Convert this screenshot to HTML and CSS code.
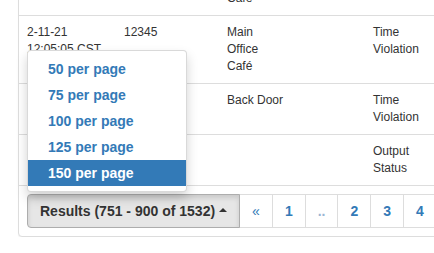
FILE: index.html
```html
<!DOCTYPE html>
<html lang="en">
<head>
  <meta charset="UTF-8">
  <meta name="viewport" content="width=device-width, initial-scale=1.0">
  <title>Events</title>
  <link rel="stylesheet" href="styles.css">
</head>
<body>
  <div id="panel">
    <table id="events">
      <colgroup>
        <col class="col-time">
        <col class="col-id">
        <col class="col-door">
        <col class="col-type">
        <col class="col-rest">
      </colgroup>
      <tbody>
        <tr>
          <td>2-11-21<br>12:05:05 CST</td>
          <td>12345</td>
          <td>Main<br>Office<br>Café</td>
          <td></td>
          <td></td>
        </tr>
        <tr>
          <td>2-11-21<br>12:05:05 CST</td>
          <td>12345</td>
          <td>Main<br>Office<br>Café</td>
          <td>Time<br>Violation</td>
          <td></td>
        </tr>
        <tr>
          <td>2-11-21<br>12:05:05 CST</td>
          <td>12345</td>
          <td>Back Door</td>
          <td>Time<br>Violation</td>
          <td></td>
        </tr>
        <tr>
          <td>2-11-21<br>12:05:05 CST</td>
          <td>12345</td>
          <td></td>
          <td>Output<br>Status</td>
          <td></td>
        </tr>
      </tbody>
    </table>

    <div id="footer">
      <div class="pager">
        <div class="dropup">
          <button class="results-btn">Results (751 - 900 of 1532)<span class="caret"></span></button>
          <ul class="per-page">
            <li><a href="#">50 per page</a></li>
            <li><a href="#">75 per page</a></li>
            <li><a href="#">100 per page</a></li>
            <li><a href="#">125 per page</a></li>
            <li class="active"><a href="#">150 per page</a></li>
          </ul>
        </div>
        <a class="page-link prev" href="#">&laquo;</a>
        <a class="page-link" href="#">1</a>
        <span class="page-link gap">..</span>
        <a class="page-link" href="#">2</a>
        <a class="page-link" href="#">3</a>
        <a class="page-link" href="#">4</a>
        <a class="page-link" href="#">5</a>
      </div>
    </div>
  </div>
</body>
</html>
```

FILE: styles.css
```css
html, body {
  margin: 0;
  padding: 0;
  overflow: hidden;
}

body {
  font-family: "Liberation Sans", Arial, sans-serif;
  font-size: 12px;
  color: #333;
  background-color: #fff;
}

#panel {
  width: 500px;
  margin: -53px 0 0 18px;
  border: 1px solid #ddd;
  border-radius: 4px;
  box-shadow: 0 1px 1px rgba(0, 0, 0, 0.05);
  background-color: #fff;
}

#events {
  width: 100%;
  table-layout: fixed;
  border-collapse: collapse;
}

.col-time { width: 97px; }
.col-id { width: 103px; }
.col-door { width: 146px; }
.col-type { width: 72px; }

#events td {
  padding: 8px;
  line-height: 17px;
  vertical-align: top;
  text-align: left;
  border-bottom: 1px solid #ddd;
}

#footer {
  padding: 8px;
}

.pager {
  display: flex;
  align-items: stretch;
  font-size: 14px;
  font-weight: bold;
  line-height: 20px;
}

.dropup {
  position: relative;
}

.results-btn {
  display: block;
  height: 34px;
  padding: 6px 12px;
  font-family: inherit;
  font-size: 14px;
  font-weight: bold;
  line-height: 20px;
  color: #333;
  background-color: #e6e6e6;
  border: 1px solid #adadad;
  border-radius: 4px 0 0 4px;
  box-shadow: inset 0 3px 5px rgba(0, 0, 0, 0.125);
  white-space: nowrap;
  cursor: pointer;
}

.caret {
  display: inline-block;
  width: 0;
  height: 0;
  margin-left: 4px;
  vertical-align: middle;
  border-right: 4px solid transparent;
  border-left: 4px solid transparent;
  border-bottom: 4px solid #333;
  position: relative;
  top: -2px;
}

.per-page {
  position: absolute;
  left: 0;
  bottom: 100%;
  margin: 0 0 2px 0;
  padding: 5px 0;
  min-width: 160px;
  list-style: none;
  background-color: #fff;
  border: 1px solid rgba(0, 0, 0, 0.15);
  border-radius: 4px;
  box-shadow: 0 6px 12px rgba(0, 0, 0, 0.175);
  box-sizing: border-box;
  z-index: 10;
}

.per-page li a {
  display: block;
  padding: 3px 20px;
  line-height: 20px;
  color: #337ab7;
  text-decoration: none;
  white-space: nowrap;
}

.per-page li.active a {
  color: #fff;
  background-color: #337ab7;
}

.page-link {
  display: block;
  margin-left: -1px;
  padding: 6px 12px;
  color: #337ab7;
  text-decoration: none;
  background-color: #fff;
  border: 1px solid #ddd;
}

.page-link.prev {
  font-weight: normal;
}

.page-link.gap {
  color: #9bb5d3;
}
```
